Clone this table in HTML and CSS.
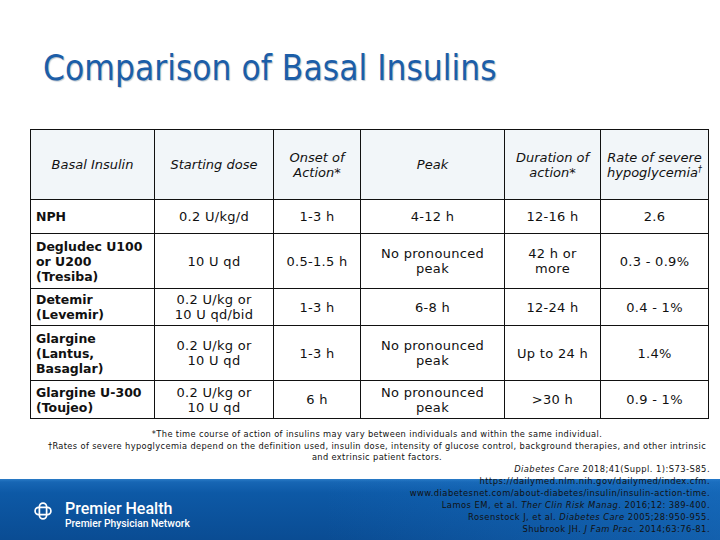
FILE: index.html
```html
<!DOCTYPE html>
<html>
<head>
<meta charset="utf-8">
<link rel="stylesheet" href="styles.css">
</head>
<body>
<div class="slide">
  <h1 class="title">Comparison of Basal Insulins</h1>
  <table class="grid">
    <colgroup>
      <col class="c1"><col class="c2"><col class="c3"><col class="c4"><col class="c5"><col class="c6">
    </colgroup>
    <thead>
      <tr class="r-head">
        <th>Basal Insulin</th>
        <th>Starting dose</th>
        <th>Onset of<br>Action*</th>
        <th>Peak</th>
        <th>Duration of<br>action*</th>
        <th>Rate of severe<br>hypoglycemia<sup>†</sup></th>
      </tr>
    </thead>
    <tbody>
      <tr class="r1">
        <td class="name">NPH</td><td>0.2 U/kg/d</td><td>1-3 h</td><td>4-12 h</td><td>12-16 h</td><td>2.6</td>
      </tr>
      <tr class="r2">
        <td class="name">Degludec U100<br>or U200<br>(Tresiba)</td><td>10 U qd</td><td>0.5-1.5 h</td><td>No pronounced<br>peak</td><td>42 h or<br>more</td><td>0.3 - 0.9%</td>
      </tr>
      <tr class="r3">
        <td class="name">Detemir<br>(Levemir)</td><td>0.2 U/kg or<br>10 U qd/bid</td><td>1-3 h</td><td>6-8 h</td><td>12-24 h</td><td>0.4 - 1%</td>
      </tr>
      <tr class="r4">
        <td class="name">Glargine<br>(Lantus,<br>Basaglar)</td><td>0.2 U/kg or<br>10 U qd</td><td>1-3 h</td><td>No pronounced<br>peak</td><td>Up to 24 h</td><td>1.4%</td>
      </tr>
      <tr class="r5">
        <td class="name">Glargine U-300<br>(Toujeo)</td><td>0.2 U/kg or<br>10 U qd</td><td>6 h</td><td>No pronounced<br>peak</td><td>&gt;30 h</td><td>0.9 - 1%</td>
      </tr>
    </tbody>
  </table>
  <div class="notes">
    <p>*The time course of action of insulins may vary between individuals and within the same individual.</p>
    <p>†Rates of severe hypoglycemia depend on the definition used, insulin dose, intensity of glucose control, background therapies, and other intrinsic</p>
    <p>and extrinsic patient factors.</p>
  </div>
  <div class="footer">
    <div class="brand">
      <svg class="logo" width="18" height="18" viewBox="0 0 20 20">
        <rect x="6" y="1.2" width="8" height="17.6" rx="4" fill="none" stroke="#fff" stroke-width="1.9"/>
        <rect x="1.2" y="6" width="17.6" height="8" rx="4" fill="none" stroke="#fff" stroke-width="1.9"/>
      </svg>
      <div class="brand-text">
        <div class="brand-main">Premier Health</div>
        <div class="brand-sub">Premier Physician Network</div>
      </div>
    </div>
    <div class="refs">
      <p><i>Diabetes Care</i> 2018;41(Suppl. 1):S73-S85.</p>
      <p>https://dailymed.nlm.nih.gov/dailymed/index.cfm.</p>
      <p>www.diabetesnet.com/about-diabetes/insulin/insulin-action-time.</p>
      <p>Lamos EM, et al. <i>Ther Clin Risk Manag</i>. 2016;12: 389-400.</p>
      <p>Rosenstock J, et al. <i>Diabetes Care</i> 2005;28:950-955.</p>
      <p>Shubrook JH. <i>J Fam Prac</i>. 2014;63:76-81.</p>
    </div>
  </div>
</div>
</body>
</html>
```

FILE: styles.css
```css
html, body {
  margin: 0;
  padding: 0;
  background: #fff;
}
.slide {
  width: 720px;
  height: 540px;
  overflow: hidden;
  display: flex;
  flex-direction: column;
  font-family: "DejaVu Sans", sans-serif;
  color: #111;
}
.title {
  margin: 0;
  padding: 48px 0 0 43px;
  font-family: "DejaVu Sans Condensed", "DejaVu Sans", sans-serif;
  font-weight: normal;
  font-size: 35px;
  line-height: 40px;
  color: #1c5ea8;
  text-shadow: 1px 1px 1px #b9c3cc;
}
.grid {
  margin: 41px 0 0 30px;
  width: 678px;
  border-collapse: collapse;
  table-layout: fixed;
  font-size: 13px;
}
.c1 { width: 124px; }
.c2 { width: 119px; }
.c3 { width: 87px; }
.c4 { width: 144px; }
.c5 { width: 96px; }
.c6 { width: 108px; }
.grid th, .grid td {
  border: 1px solid #111;
  padding: 0 4px;
  text-align: center;
  vertical-align: middle;
  line-height: 15px;
}
.grid td { letter-spacing: 0.3px; }
.grid th {
  font-style: italic;
  font-weight: normal;
  background: #f2f6f9;
  color: #111;
}
.grid th sup {
  font-size: 8px;
  vertical-align: 5px;
  line-height: 0;
}
.r-head { height: 70px; }
.r1 { height: 34px; }
.r2 { height: 55px; }
.r3 { height: 37px; }
.r4 { height: 55px; }
.r5 { height: 38px; }
.grid td.name {
  text-align: left;
  font-weight: bold;
  font-size: 12.5px;
  letter-spacing: 0;
  padding-left: 5px;
}
.notes {
  margin: 9px 10px 0 44px;
  display: flex;
  flex-direction: column;
  align-items: center;
  font-family: "DejaVu Sans Condensed", "DejaVu Sans", sans-serif;
  font-size: 9.2px;
  letter-spacing: 0.37px;
  line-height: 11.5px;
  white-space: nowrap;
}
.notes p, .refs p { margin: 0; }
.footer {
  flex: 1;
  display: flex;
  justify-content: space-between;
  align-items: flex-start;
  background:
    linear-gradient(to right, rgba(30,120,205,0) 45%, rgba(30,120,205,0.45) 100%) 0 16px / 100% 100% no-repeat,
    linear-gradient(to bottom, #fff 0, #fff 16px, #2a7bc6 16px, #1766b4 19px, #0d59a6 30px, #0a4c93 100%);
}
.brand {
  display: flex;
  align-items: flex-start;
  gap: 13px;
  margin: 37px 0 0 34px;
  color: #fff;
}
.logo { display: block; margin-top: 2px; }
.brand-text { font-family: Roboto, "DejaVu Sans", sans-serif; }
.brand-main {
  font-size: 16px;
  font-weight: 500;
  line-height: 18.5px;
}
.brand-sub {
  font-size: 10.3px;
  font-weight: 500;
  line-height: 12.5px;
}
.refs {
  margin: 0 10px 0 0;
  text-align: right;
  font-family: "DejaVu Sans Condensed", "DejaVu Sans", sans-serif;
  font-size: 9.3px;
  letter-spacing: 0.45px;
  line-height: 12px;
  color: #111;
}
```
